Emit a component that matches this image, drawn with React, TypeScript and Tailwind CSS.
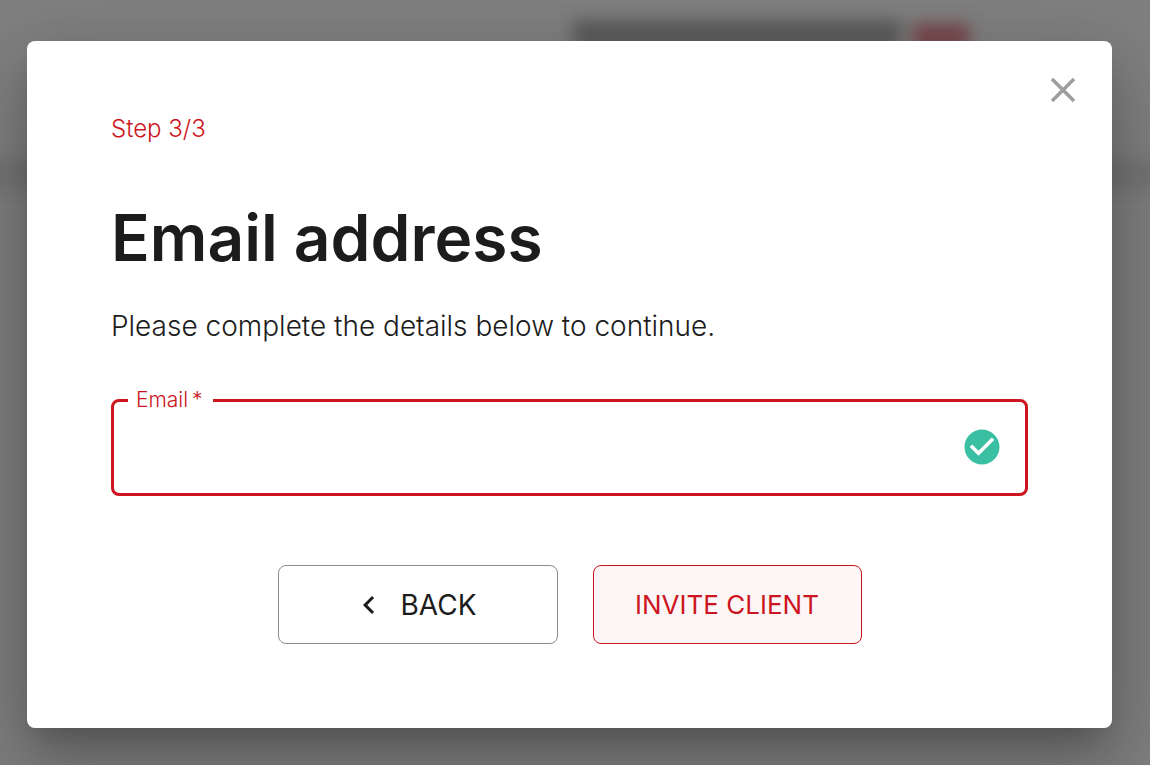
import { useState } from "react";
import { MdCheckCircle, MdClose, MdNavigateBefore } from "react-icons/md";

function PageBehind() {
  return (
    <div aria-hidden="true" className="absolute inset-0 flex flex-col overflow-hidden bg-[#7f7f7f]">
      <div className="flex h-40 shrink-0 justify-center bg-[#808080] pt-5">
        <div className="ml-[392px] flex h-7 blur-[8px]">
          <div className="w-82 bg-[#5b5b5b]" />
          <div className="mt-1 ml-3 w-14 bg-[#774449]" />
        </div>
      </div>
      <div className="-mx-8 h-7 shrink-0 bg-[#737373] blur-[10px]" />
    </div>
  );
}

export default function App() {
  const [email, setEmail] = useState("");

  return (
    <div className="relative grid min-h-screen items-center bg-[#7f7f7f] pt-10 pr-[38px] pb-9 pl-[27px] font-['Inter','Liberation_Sans',sans-serif] text-[#1c1c1c]">
      <PageBehind />
      <div
        role="dialog"
        aria-modal="true"
        aria-labelledby="dialog-title"
        className="relative rounded-lg bg-white px-21 pt-18 pb-21 shadow-[0_19px_26px_-12px_rgba(0,0,0,0.2),0_42px_66px_5px_rgba(0,0,0,0.14),0_16px_80px_14px_rgba(0,0,0,0.12)]"
      >
        <button type="button" aria-label="Close" className="absolute top-7 right-7 text-[#9e9e9e]">
          <MdClose className="size-[42px]" />
        </button>

        <p className="text-2xl leading-8 font-light text-[#cc1520]">Step 3/3</p>
        <h1 id="dialog-title" className="mt-[53px] text-[64px] leading-20 font-semibold">
          Email address
        </h1>
        <p className="mt-7 text-[28px] leading-10 font-light">
          Please complete the details below to continue.
        </p>

        <form onSubmit={(e) => e.preventDefault()}>
          <fieldset className="mt-[42px] min-w-0 rounded-lg border-3 border-[#cc1520] pr-[22px] pl-[14px]">
            <legend className="pr-[10px] pl-2 text-[21px] leading-6 font-light text-[#cc1520]">
              <label htmlFor="email">Email&thinsp;*</label>
            </legend>
            <div className="flex h-[81px] items-center pb-3">
              <input
                id="email"
                type="email"
                required
                value={email}
                onChange={(e) => setEmail(e.target.value)}
                className="h-14 min-w-0 flex-1 px-2 text-[28px] font-light outline-none"
              />
              <MdCheckCircle className="size-[42px] shrink-0 text-[#3bbfa3]" />
            </div>
          </fieldset>

          <div className="mt-[69px] flex flex-wrap justify-center gap-[35px]">
            <button
              type="button"
              className="flex h-[79px] w-[280px] items-center justify-center gap-[14px] rounded-lg border border-[#8c8c8c] pr-2 text-[28px]"
            >
              <MdNavigateBefore className="size-9" />
              BACK
            </button>
            <button
              type="submit"
              className="h-[79px] w-[269px] rounded-lg border border-[#cc1520] bg-[#fcf6f6] text-[26px] text-[#cc1520]"
            >
              INVITE CLIENT
            </button>
          </div>
        </form>
      </div>
    </div>
  );
}
